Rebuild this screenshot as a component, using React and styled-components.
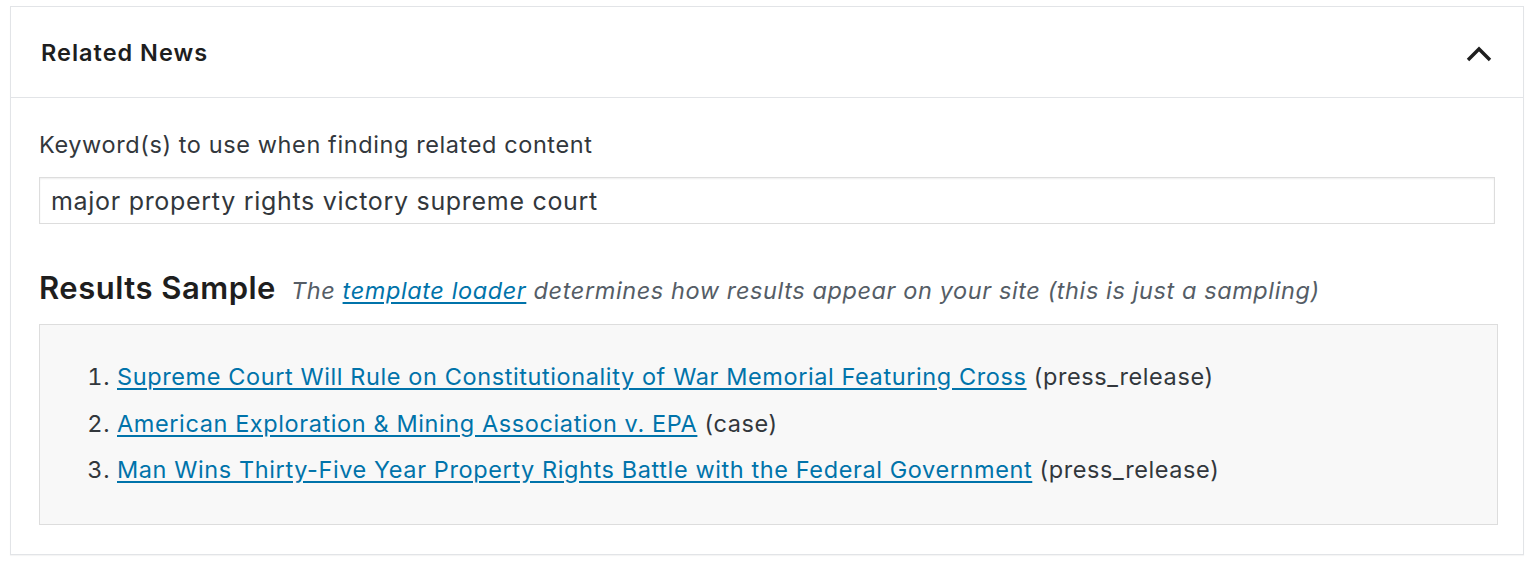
import React from "react";
import styled, { createGlobalStyle } from "styled-components";

const GlobalStyle = createGlobalStyle`
  body {
    margin: 0;
    background: #ffffff;
    font-family: Inter, "Noto Sans", sans-serif;
  }
`;

// Styled Components
const Page = styled.div`
  padding: 6px 12px 14px 10px;
`;

const Panel = styled.div`
  border: 1px solid #e2e4e7;
  box-shadow: 0 1px 1px rgba(0, 0, 0, 0.04);
  background: #fff;
`;

const Header = styled.div`
  display: flex;
  align-items: center;
  justify-content: space-between;
  height: 90px;
  padding: 0 30px 0 30px;
  border-bottom: 1px solid #e2e4e7;
`;

const Title = styled.h2`
  margin: 0;
  font-size: 23.5px;
  letter-spacing: 1px;
  font-weight: 600;
  color: #1e1e1e;
`;

const Toggle = styled.button`
  background: none;
  border: none;
  padding: 4px 0 0 0;
  display: flex;
  cursor: pointer;
`;

const Body = styled.div`
  padding: 33px 24px 29px 28px;
`;

const Label = styled.label`
  display: block;
  font-size: 23.5px;
  line-height: 28px;
  letter-spacing: 0.6px;
  color: #32373c;
  margin-bottom: 18px;
`;

const Input = styled.input`
  box-sizing: border-box;
  width: calc(100% - 4px);
  height: 47px;
  padding: 0 11px;
  border: 1px solid #dddddd;
  box-shadow: inset 0 1px 2px rgba(0, 0, 0, 0.07);
  font-family: inherit;
  font-size: 25px;
  letter-spacing: 0.7px;
  color: #32373c;
  outline: none;
`;

const ResultsHeading = styled.div`
  display: flex;
  align-items: baseline;
  gap: 15px;
  margin-top: 45px;
  margin-bottom: 14px;
  line-height: 38px;
`;

const HeadingText = styled.h3`
  margin: 0;
  font-size: 31px;
  letter-spacing: 0.5px;
  font-weight: 600;
  color: #1e1e1e;
`;

const Note = styled.em`
  font-size: 23.5px;
  letter-spacing: 0.6px;
  color: #555d66;
`;

const Link = styled.a`
  color: #0073aa;
  text-decoration: underline;
  text-underline-offset: 3px;
`;

const ResultsBox = styled.div`
  background: #f8f8f8;
  border: 1px solid #dddddd;
  margin-right: 1px;
  padding: 38px 0 40px 0;
`;

const List = styled.ol`
  margin: 0;
  padding-left: 77px;
  display: flex;
  flex-direction: column;
  gap: 18.5px;
`;

const Item = styled.li`
  font-size: 23.5px;
  line-height: 28px;
  letter-spacing: 0.6px;
  color: #32373c;
`;

const results = [
  { title: "Supreme Court Will Rule on Constitutionality of War Memorial Featuring Cross", type: "press_release" },
  { title: "American Exploration & Mining Association v. EPA", type: "case" },
  { title: "Man Wins Thirty-Five Year Property Rights Battle with the Federal Government", type: "press_release" },
];

const App = () => {
  return (
    <Page>
      <GlobalStyle />
      <Panel>
        <Header>
          <Title>Related News</Title>
          <Toggle aria-label="Toggle panel">
            <svg width="28" height="18" viewBox="0 0 28 18">
              <polyline points="3,15 14,4 25,15" fill="none" stroke="#1e1e1e" strokeWidth="3.4" />
            </svg>
          </Toggle>
        </Header>
        <Body>
          <Label>Keyword(s) to use when finding related content</Label>
          <Input defaultValue="major property rights victory supreme court" />
          <ResultsHeading>
            <HeadingText>Results Sample</HeadingText>
            <Note>
              The <Link href="#">template loader</Link> determines how results appear on your site (this is just a sampling)
            </Note>
          </ResultsHeading>
          <ResultsBox>
            <List>
              {results.map((r) => (
                <Item key={r.title}>
                  <Link href="#">{r.title}</Link> ({r.type})
                </Item>
              ))}
            </List>
          </ResultsBox>
        </Body>
      </Panel>
    </Page>
  );
};

export default App;
